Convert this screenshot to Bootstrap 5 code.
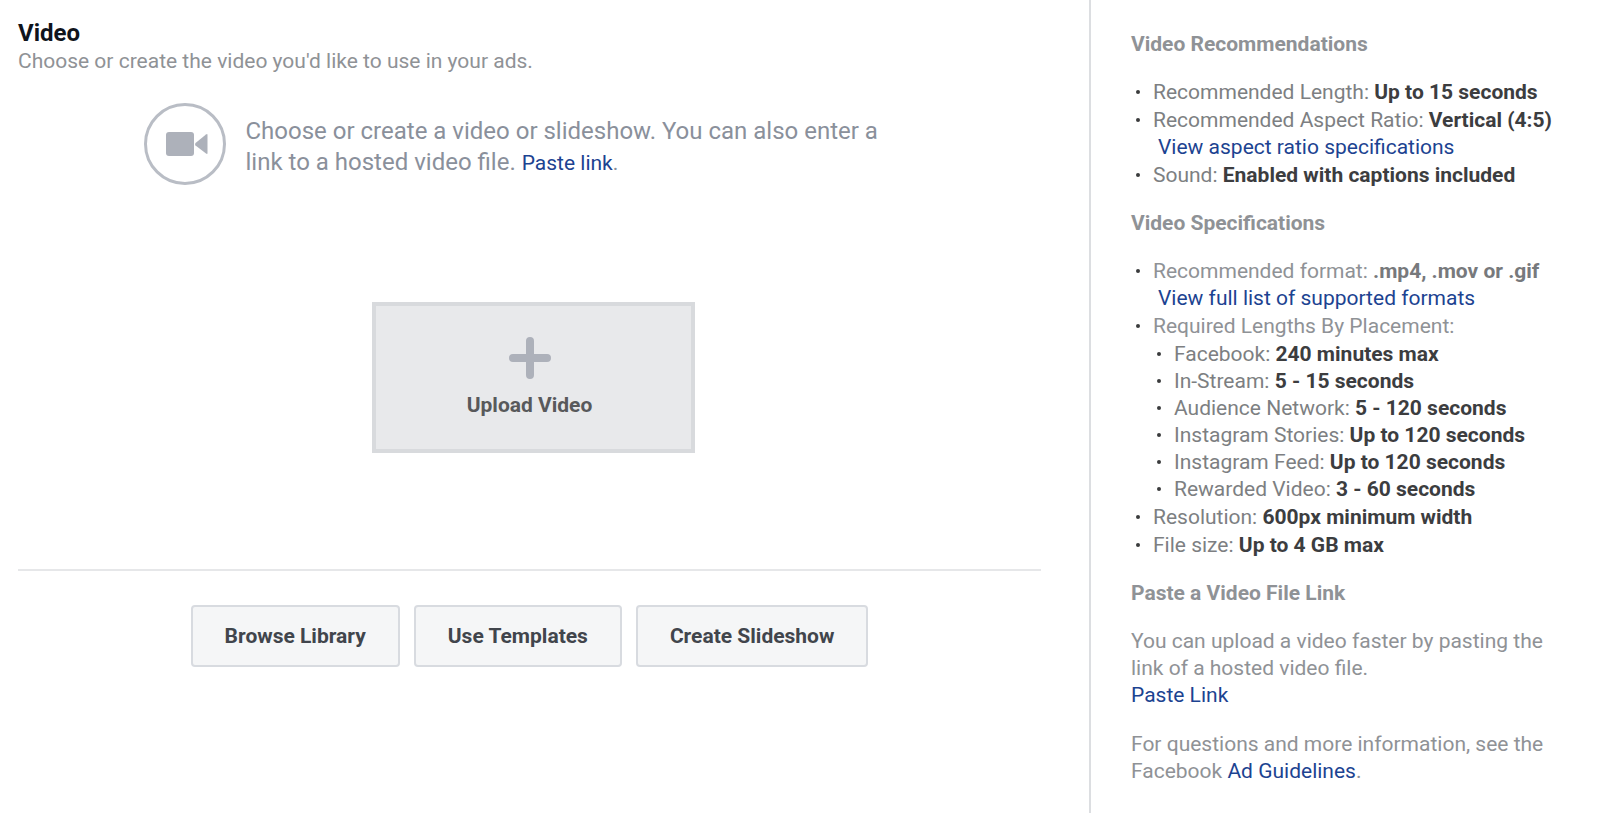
<!DOCTYPE html>
<html lang="en">
<head>
<meta charset="utf-8">
<meta name="viewport" content="width=device-width, initial-scale=1">
<title>Video</title>
<link href="https://cdn.jsdelivr.net/npm/bootstrap@5.3.0/dist/css/bootstrap.min.css" rel="stylesheet">
<style>
  body { font-family: Roboto, "Liberation Sans", sans-serif; font-size: 21px; line-height: 27px; color: #8f9296; background: #fff; }
  a { color: #1c4391; text-decoration: none; }
  a:hover { text-decoration: underline; }
  .picker { padding: 19px 48px 0 18px; }
  .picker h1 { font-size: 24px; line-height: 28px; color: #10141c; }
  .lead-in { line-height: 29px; }
  .intro { max-width: 772px; margin-top: 27px; gap: 20px; }
  .intro p { padding-top: 13px; font-size: 24px; line-height: 31px; color: #8a909b; }
  .intro a, .intro .stop { font-size: 21px; }
  .upload { width: 323px; height: 151px; margin-top: 117px; padding: 0 8px 0 0; gap: 13px; border: 4px solid #d8dadd; background: #e8e9eb; color: #58595b; font-weight: 700; }
  .upload-wrap { padding-left: 8px; }
  .rule { height: 2px; margin: 116px 0 34px; background: #e6e7e9; border: 0; opacity: 1; }
  .actions { gap: 14px; }
  .actions .btn { --bs-btn-padding-x: 32px; --bs-btn-padding-y: 15px; --bs-btn-font-size: 21px; --bs-btn-line-height: 28px; --bs-btn-font-weight: 700; --bs-btn-color: #41454c; --bs-btn-bg: #f5f6f7; --bs-btn-border-color: #d8dbe0; --bs-btn-border-width: 2px; --bs-btn-border-radius: 4px; --bs-btn-hover-bg: #ebedf0; --bs-btn-hover-border-color: #c8ccd2; --bs-btn-hover-color: #3c4048; }
  .guide { flex: 0 0 511px; padding: 31px 40px 0 40px; border-left: 2px solid #dcdee1; }
  .guide h2 { font-size: 21px; line-height: 27px; font-weight: 700; margin: 0 0 21px; }
  .guide p { margin-bottom: 22px; }
  .specs { list-style: none; margin: 0 0 21px; padding: 0; display: grid; gap: 1px; }
  .specs ul { list-style: none; margin: 1px 0 0 -1px; padding: 0; }
  .specs li { display: grid; grid-template-columns: 22px 1fr; color: #7d7f82; }
  .specs li::before { content: ""; width: 4px; height: 4px; margin: 11px 0 0 5px; border-radius: 50%; background: #3a3b3d; }
  .specs b { color: #3c3d3f; }
  .specs .soft { color: #8f9296; }
  .specs .soft b { color: #77797c; }
  .specs .more { display: block; padding-left: 5px; }
</style>
</head>
<body>
<div class="d-flex min-vh-100">
  <main class="picker flex-grow-1">
    <h1 class="fw-bold mb-0">Video</h1>
    <p class="lead-in mb-0">Choose or create the video you'd like to use in your ads.</p>

    <div class="intro d-flex mx-auto">
      <svg class="flex-shrink-0" width="82" height="82" viewBox="0 0 82 82" aria-hidden="true">
        <circle cx="41" cy="41" r="39.5" fill="none" stroke="#b9bdc5" stroke-width="3"/>
        <rect x="22" y="29" width="28" height="24" rx="3" fill="#adb1ba"/>
        <path d="M51.500 40 62 31.500Q63.500 30.500 63.500 32V50Q63.500 51.500 62 50.500L51.500 42.500Q50.500 41.200 51.500 40Z" fill="#adb1ba"/>
      </svg>
      <p class="mb-0">Choose or create a video or slideshow. You can also enter a link to a hosted video file. <a href="#">Paste link</a><span class="stop">.</span></p>
    </div>

    <div class="upload-wrap d-flex justify-content-center">
      <button type="button" class="upload d-flex flex-column align-items-center justify-content-center">
        <svg width="42" height="42" viewBox="0 0 42 42" fill="none" stroke="#adb1ba" stroke-width="8" stroke-linecap="round" aria-hidden="true"><path d="M21 4V38M4 21H38"/></svg>
        <span>Upload Video</span>
      </button>
    </div>

    <hr class="rule">

    <div class="actions d-flex flex-wrap justify-content-center">
      <button type="button" class="btn">Browse Library</button>
      <button type="button" class="btn">Use Templates</button>
      <button type="button" class="btn">Create Slideshow</button>
    </div>
  </main>

  <aside class="guide">
    <h2>Video Recommendations</h2>
    <ul class="specs">
      <li><div>Recommended Length: <b>Up to 15 seconds</b></div></li>
      <li><div>Recommended Aspect Ratio: <b>Vertical (4:5)</b> <a class="more" href="#">View aspect ratio specifications</a></div></li>
      <li><div>Sound: <b>Enabled with captions included</b></div></li>
    </ul>

    <h2>Video Specifications</h2>
    <ul class="specs">
      <li><div class="soft">Recommended format: <b>.mp4, .mov or .gif</b> <a class="more" href="#">View full list of supported formats</a></div></li>
      <li><div><span class="soft">Required Lengths By Placement:</span>
        <ul>
          <li><div>Facebook: <b>240 minutes max</b></div></li>
          <li><div>In-Stream: <b>5 - 15 seconds</b></div></li>
          <li><div>Audience Network: <b>5 - 120 seconds</b></div></li>
          <li><div>Instagram Stories: <b>Up to 120 seconds</b></div></li>
          <li><div>Instagram Feed: <b>Up to 120 seconds</b></div></li>
          <li><div>Rewarded Video: <b>3 - 60 seconds</b></div></li>
        </ul>
      </div></li>
      <li><div>Resolution: <b>600px minimum width</b></div></li>
      <li><div>File size: <b>Up to 4 GB max</b></div></li>
    </ul>

    <h2>Paste a Video File Link</h2>
    <p>You can upload a video faster by pasting the link of a hosted video file.<br><a href="#">Paste Link</a></p>
    <p class="mb-0">For questions and more information, see the Facebook <a href="#">Ad Guidelines</a>.</p>
  </aside>
</div>
<script src="https://cdn.jsdelivr.net/npm/bootstrap@5.3.0/dist/js/bootstrap.bundle.min.js"></script>
</body>
</html>
